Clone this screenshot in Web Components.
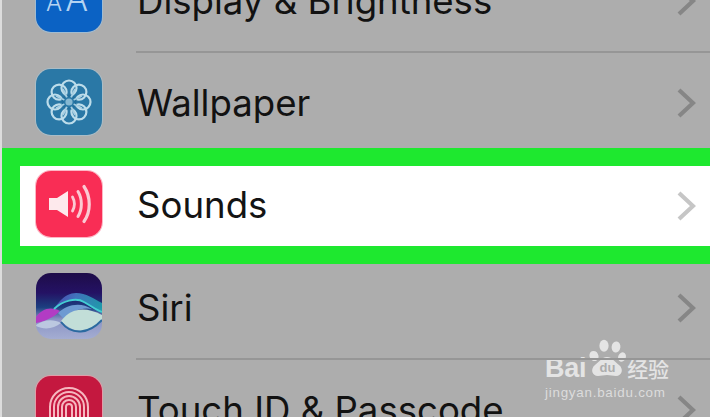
<!DOCTYPE html>
<html lang="zh"><head><meta charset="utf-8"><title>Sounds</title>
<style>
html,body{margin:0;padding:0;width:710px;height:417px;overflow:hidden;background:#adadad}
</style></head><body>
<template id="t-list"><style>
:host{display:block;position:relative;width:710px;height:417px;overflow:hidden;background:#adadad;font-family:Inter,"Liberation Sans",sans-serif;box-sizing:border-box;border-left:2px solid #dcdcdc}
.wrap{display:flex;flex-direction:column;margin-top:-49.3px}
</style><div class="wrap"><slot></slot></div><slot name="mark"></slot></template>

<template id="t-row"><style>
:host{display:block;position:relative;height:102.3px;box-sizing:border-box}
.row{display:flex;align-items:center;height:100%;padding-left:34px;gap:34px;position:relative;z-index:1}
.icon{width:66px;height:66px;flex:none;border-radius:15px;overflow:hidden;display:flex;margin-top:-5px;box-shadow:0 0 0 1px var(--halo,transparent)}
::slotted([slot=icon]){display:block;width:66px;height:66px}
.body{flex:1;height:100%;display:flex;align-items:center;justify-content:space-between;padding-right:14px;box-sizing:border-box;position:relative}
:host([sep]) .body{box-shadow:inset 0 -2px 0 #969696}
.label{font-size:36.6px;line-height:44px;color:#121212;white-space:nowrap;margin-top:-2px;padding-left:1px}
svg.chev{width:20px;height:32px;flex:none;display:block;margin-top:-2px}
:host([active]) .hl{position:absolute;left:0;right:0;top:-7.3px;bottom:-6.4px;background:#fff;border:18px solid #1ee82f;border-right:0;box-sizing:border-box;z-index:0}
:host([active]) .label{color:#141414}
:host([active]) svg.chev{margin-top:0}
:host([active]) svg.chev path{stroke:#c6c6c6}
</style><div class="hl"></div><div class="row"><div class="icon"><slot name="icon"></slot></div><div class="body"><span class="label"><slot></slot></span><svg class="chev" viewBox="0 0 20 32"><path d="M3 3 L17 16 L3 29" fill="none" stroke="#868686" stroke-width="4.2"/></svg></div></div></template>

<template id="t-mark"><style>
:host{display:block;position:absolute;left:543px;top:339px;width:130px;height:62px;color:#e4e4e4;font-family:"Liberation Sans",Arial,sans-serif}
.top{display:flex;align-items:flex-end;gap:2px;height:42px}
.bai{font-size:27px;font-weight:700;line-height:26px;letter-spacing:-.3px}
.paw{width:38px;height:42px;flex:none;display:block}
.cn{font-family:"Noto Sans CJK SC",sans-serif;font-size:21px;line-height:26px;font-weight:500;margin-left:-1px;white-space:nowrap}
.url{font-size:13.4px;line-height:17px;letter-spacing:.75px;margin-top:3px;white-space:nowrap;color:#dcdcdc}
</style><div class="top"><span class="bai">Bai</span><svg class="paw" viewBox="0 0 38 42"><g fill="#e4e4e4"><ellipse cx="6" cy="17" rx="4.400" ry="5.200" transform="rotate(-25 6 17)"/><ellipse cx="16" cy="6.800" rx="4.600" ry="6"/><ellipse cx="28" cy="8" rx="4.400" ry="5.600" transform="rotate(10 28 8)"/><ellipse cx="34" cy="18" rx="3.800" ry="4.800" transform="rotate(20 34 18)"/><path d="M19 18c5 0 8 5 12 8 5 4 3 11-3 11-3 0-6-1-9-1s-6 1-9 1c-6 0-8-7-3-11 4-3 7-8 12-8z"/></g><text x="19.5" y="33" text-anchor="middle" font-family="Liberation Sans" font-weight="700" font-size="13" fill="#adadad">du</text></svg><span class="cn">经验</span></div><div class="url">jingyan.baidu.com</div></template>

<settings-list>
<settings-row sep style="--halo:rgba(150,200,240,.55)">
<svg slot="icon" viewBox="0 0 66 66"><rect width="66" height="66" fill="#0b62c4"/><text x="10" y="45" font-family="Inter,Liberation Sans" font-weight="300" fill="#b4d3f2"><tspan font-size="24">A</tspan><tspan font-size="34" dx="3">A</tspan></text></svg>
Display &amp; Brightness</settings-row>
<settings-row style="--halo:rgba(165,205,225,.5)">
<svg slot="icon" viewBox="0 0 66 66"><rect width="66" height="66" fill="#2a78a6"/><g fill="none" stroke="#bcdcea" stroke-width="2.200"><circle cx="33" cy="19" r="7.500"/><circle cx="33" cy="19" r="7.500" transform="rotate(45 33 33)"/><circle cx="33" cy="19" r="7.500" transform="rotate(90 33 33)"/><circle cx="33" cy="19" r="7.500" transform="rotate(135 33 33)"/><circle cx="33" cy="19" r="7.500" transform="rotate(180 33 33)"/><circle cx="33" cy="19" r="7.500" transform="rotate(225 33 33)"/><circle cx="33" cy="19" r="7.500" transform="rotate(270 33 33)"/><circle cx="33" cy="19" r="7.500" transform="rotate(315 33 33)"/></g><circle cx="33" cy="33" r="8" fill="#226f9d"/><g stroke="#a8cfe2" stroke-width="1.800"><path d="M33 33 L27 20M33 33 L39 20M33 33 L46 27M33 33 L46 39M33 33 L39 46M33 33 L27 46M33 33 L20 39M33 33 L20 27"/></g><circle cx="33" cy="33" r="5.200" fill="#2a78a6"/><circle cx="33" cy="33" r="3.600" fill="#86b8d2"/></svg>
Wallpaper</settings-row>
<settings-row active style="--halo:rgba(249,45,85,.35)">
<svg slot="icon" viewBox="0 0 66 66"><rect width="66" height="66" fill="#f92d55"/><path d="M13 27h8l11-7v26l-11-7h-8z" fill="#fde9ec"/><g fill="none" stroke="#fbc9d3" stroke-linecap="round"><path d="M36.500 26c2.500 4.500 2.500 9.500 0 14" stroke-width="2.800"/><path d="M42 20.500c4.500 7.500 4.500 17.500 0 25" stroke-width="3"/><path d="M48 15.500c7 10.500 7 25 0 35" stroke-width="3.200"/></g></svg>
Sounds</settings-row>
<settings-row sep>
<svg slot="icon" viewBox="0 0 66 66"><defs><linearGradient id="sg" x1="0" y1="0" x2="0" y2="1"><stop offset="0" stop-color="#1e0c48"/><stop offset=".3" stop-color="#241264"/><stop offset=".52" stop-color="#1c3f80"/><stop offset=".7" stop-color="#8a93c4"/><stop offset="1" stop-color="#a4add2"/></linearGradient><linearGradient id="w1" x1="0" y1="0" x2="1" y2="0"><stop offset="0" stop-color="#5a4ac0"/><stop offset=".5" stop-color="#4b90d8"/><stop offset="1" stop-color="#1fb8b8"/></linearGradient></defs><rect width="66" height="66" fill="url(#sg)"/><path d="M14 42C24 30 36 24 44 28c8 3 16 10 22 12V30c-8-4-16-10-26-10C28 20 20 32 14 42z" fill="url(#w1)" opacity=".75"/><path d="M0 44c6-8 14-11 24-6-6 6-14 10-24 12z" fill="#b23cc4"/><path d="M22 40c8-8 22-12 34-4-10-2-20 2-28 10z" fill="#6d9ad2"/><path d="M25 48c11-14 25-14 41-6v6c-10 12-28 14-41 0z" fill="#c2ded8"/><path d="M0 52c8-6 18-6 25-2-7 6-17 7-25 3z" fill="#bcc8e0"/><path d="M25 49c11 14 28 12 41-2" fill="none" stroke="#2b6aa0" stroke-width="2"/><path d="M18 36c8-8 22-12 30-7 6 3 12 8 18 10" fill="none" stroke="#43cfd2" stroke-width="1.800"/></svg>
Siri</settings-row>
<settings-row style="--halo:rgba(245,150,165,.75)">
<svg slot="icon" viewBox="0 0 66 66"><rect width="66" height="66" fill="#c4183f"/><g fill="none" stroke="#f6b7bf" stroke-width="2" stroke-linecap="round"><path d="M14 44V31a19 19 0 0 1 38 0v14"/><path d="M18 50V31a15 15 0 0 1 30 0v19"/><path d="M22 56V31a11 11 0 0 1 22 0v25"/><path d="M26 60V31a7 7 0 0 1 14 0v29"/><path d="M30 62V31a3 3 0 0 1 6 0v31"/></g></svg>
Touch ID &amp; Passcode</settings-row>
<baidu-mark slot="mark"></baidu-mark>
</settings-list>
<script>
function def(name,id){customElements.define(name,class extends HTMLElement{constructor(){super();this.attachShadow({mode:'open'}).appendChild(document.getElementById(id).content.cloneNode(true));}});}
def('settings-list','t-list');def('settings-row','t-row');def('baidu-mark','t-mark');
</script>
</body></html>
